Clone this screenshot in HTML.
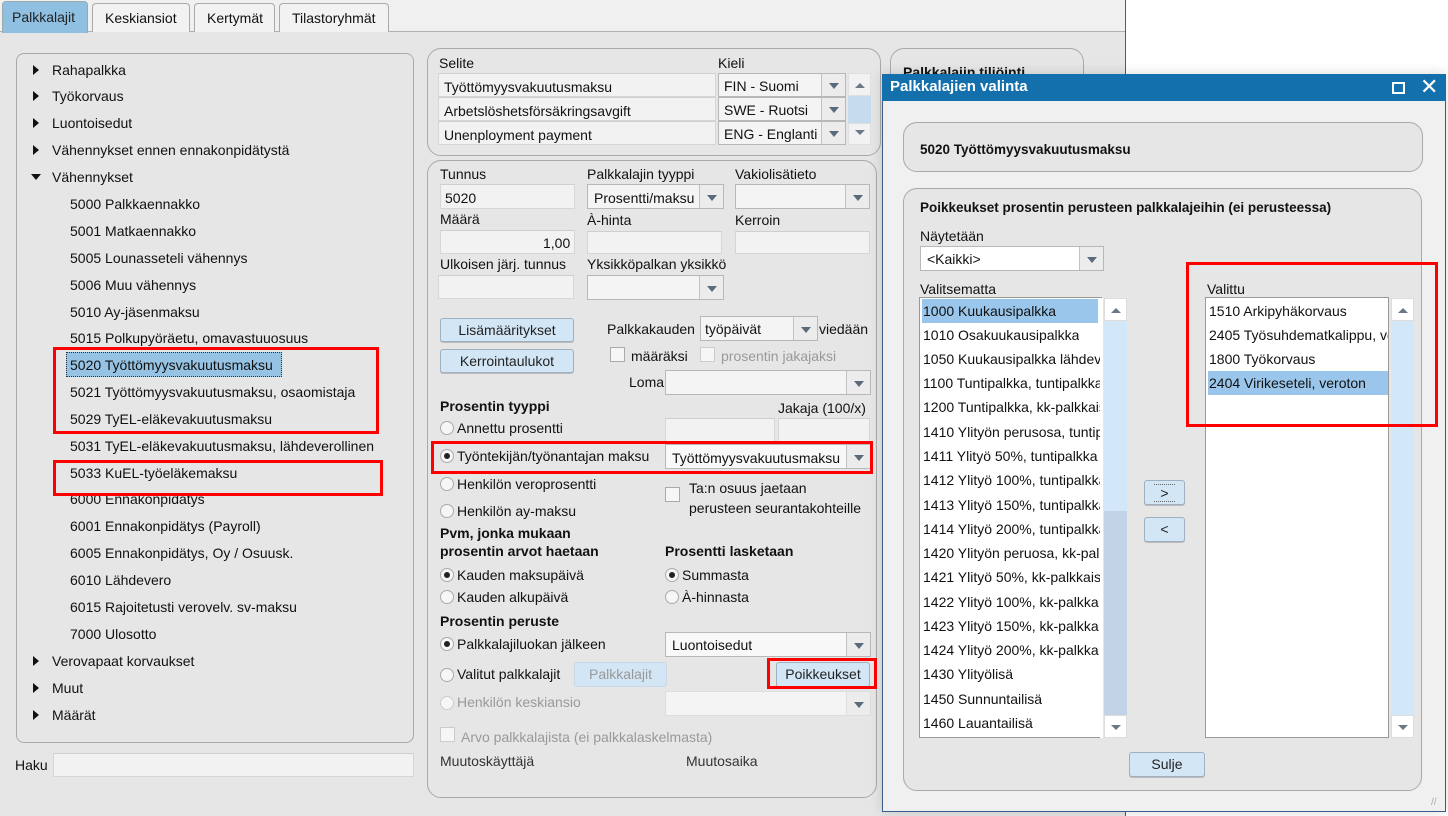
<!DOCTYPE html>
<html><head><meta charset="utf-8"><style>
*{box-sizing:border-box;margin:0;padding:0}
body{width:1448px;height:816px;position:relative;overflow:hidden;background:#fff;font-family:"Liberation Sans",Arial,sans-serif;font-size:14px;color:#111}
div,span{position:absolute}
.t{white-space:nowrap;line-height:16px}
.b{font-weight:bold}
.g{color:#999}
.inp{background:#f2f2f2;border:1px solid #d6d6d6;border-top-color:#cfcfcf}
.cb{background:#f4f4f4;border:1px solid #b8b8b8}
.cb .ar{right:0;top:0;bottom:0;width:24px;border-left:1px solid #c2c2c2;background:#ececec}
.ar:after{content:"";position:absolute;left:7px;top:50%;margin-top:-2px;border-left:5px solid transparent;border-right:5px solid transparent;border-top:6px solid #5a6a7a}
.panel{border:1px solid #a9a9a9;border-radius:14px;background:#e6e6e6}
.btn{background:#d3e6f5;border:1px solid #9fb0c0;border-radius:3px;text-align:center;line-height:22px;color:#222;box-shadow:0 1px 0 #bbb}
.red{border:3px solid #f00}
.rad{width:14px;height:14px;border:1px solid #aaa;border-radius:50%;background:#f6f6f6}
.rad.on:after{content:"";position:absolute;left:3px;top:3px;width:6px;height:6px;border-radius:50%;background:#222}
.chk{width:15px;height:15px;border:1px solid #aaa;background:#f6f6f6}
.tri{width:0;height:0;border-top:5px solid transparent;border-bottom:5px solid transparent;border-left:6px solid #111}
.trd{width:0;height:0;border-left:5px solid transparent;border-right:5px solid transparent;border-top:6px solid #111}
.li{left:2px;height:24px;line-height:24px;padding-left:1px;white-space:nowrap;overflow:hidden}
.su:after{content:"";position:absolute;left:6px;top:9px;border-left:5px solid transparent;border-right:5px solid transparent;border-bottom:5px solid #6a7888}
.sd:after{content:"";position:absolute;left:6px;top:9px;border-left:5px solid transparent;border-right:5px solid transparent;border-top:5px solid #6a7888}
</style></head><body>
<!-- main window -->
<div style="left:0;top:0;width:1126px;height:816px;background:#e6e6e6;border-right:1px solid #4a5a80"></div>
<div style="left:0;top:0;width:1125px;height:32px;background:#f0f0f0;border-bottom:1px solid #b0b0b0"></div>
<div style="left:2px;top:1px;width:86px;height:32px;background:#8fc0e2;border:1px solid #9aa;border-bottom:none;border-radius:4px 4px 0 0"></div>
<span class="t" style="left:12px;top:9px;color:#222">Palkkalajit</span>
<div style="left:92px;top:3px;width:98px;height:29px;background:#f2f2f2;border:1px solid #aaa;border-bottom:none;border-radius:4px 4px 0 0"></div>
<span class="t" style="left:105px;top:10px">Keskiansiot</span>
<div style="left:194px;top:3px;width:81px;height:29px;background:#f2f2f2;border:1px solid #aaa;border-bottom:none;border-radius:4px 4px 0 0"></div>
<span class="t" style="left:207px;top:10px">Kertymät</span>
<div style="left:279px;top:3px;width:110px;height:29px;background:#f2f2f2;border:1px solid #aaa;border-bottom:none;border-radius:4px 4px 0 0"></div>
<span class="t" style="left:292px;top:10px">Tilastoryhmät</span>

<!-- left tree -->
<div class="panel" style="left:16px;top:53px;width:398px;height:690px;border-radius:8px"></div>
<div class="tri" style="left:33px;top:65px"></div><span class="t" style="left:52px;top:62px">Rahapalkka</span>
<div class="tri" style="left:33px;top:91px"></div><span class="t" style="left:52px;top:88px">Työkorvaus</span>
<div class="tri" style="left:33px;top:118px"></div><span class="t" style="left:52px;top:115px">Luontoisedut</span>
<div class="tri" style="left:33px;top:145px"></div><span class="t" style="left:52px;top:142px">Vähennykset ennen ennakonpidätystä</span>
<div class="trd" style="left:31px;top:174px"></div><span class="t" style="left:52px;top:169px">Vähennykset</span>
<span class="t" style="left:70px;top:196px">5000 Palkkaennakko</span>
<span class="t" style="left:70px;top:223px">5001 Matkaennakko</span>
<span class="t" style="left:70px;top:250px">5005 Lounasseteli vähennys</span>
<span class="t" style="left:70px;top:277px">5006 Muu vähennys</span>
<span class="t" style="left:70px;top:304px">5010 Ay-jäsenmaksu</span>
<span class="t" style="left:70px;top:330px">5015 Polkupyöräetu, omavastuuosuus</span>
<div style="left:66px;top:352px;width:216px;height:25px;background:#96c2e4;border:1px dotted #333"></div>
<span class="t" style="left:70px;top:357px">5020 Työttömyysvakuutusmaksu</span>
<span class="t" style="left:70px;top:384px">5021 Työttömyysvakuutusmaksu, osaomistaja</span>
<span class="t" style="left:70px;top:411px">5029 TyEL-eläkevakuutusmaksu</span>
<span class="t" style="left:70px;top:438px">5031 TyEL-eläkevakuutusmaksu, lähdeverollinen</span>
<span class="t" style="left:70px;top:465px">5033 KuEL-työeläkemaksu</span>
<span class="t" style="left:70px;top:491px">6000 Ennakonpidätys</span>
<span class="t" style="left:70px;top:518px">6001 Ennakonpidätys (Payroll)</span>
<span class="t" style="left:70px;top:545px">6005 Ennakonpidätys, Oy / Osuusk.</span>
<span class="t" style="left:70px;top:572px">6010 Lähdevero</span>
<span class="t" style="left:70px;top:599px">6015 Rajoitetusti verovelv. sv-maksu</span>
<span class="t" style="left:70px;top:626px">7000 Ulosotto</span>
<div class="tri" style="left:33px;top:656px"></div><span class="t" style="left:52px;top:653px">Verovapaat korvaukset</span>
<div class="tri" style="left:33px;top:683px"></div><span class="t" style="left:52px;top:680px">Muut</span>
<div class="tri" style="left:33px;top:710px"></div><span class="t" style="left:52px;top:707px">Määrät</span>
<span class="t" style="left:15px;top:757px">Haku</span>
<div class="inp" style="left:53px;top:753px;width:361px;height:24px"></div>

<!-- selite panel -->
<div class="panel" style="left:427px;top:48px;width:454px;height:108px"></div>
<span class="t" style="left:439px;top:55px">Selite</span><span class="t" style="left:718px;top:55px">Kieli</span>
<div class="inp" style="left:438px;top:73px;width:278px;height:24px"></div><span class="t" style="left:444px;top:79px">Työttömyysvakuutusmaksu</span>
<div class="inp" style="left:438px;top:97px;width:278px;height:24px"></div><span class="t" style="left:444px;top:103px">Arbetslöshetsförsäkringsavgift</span>
<div class="inp" style="left:438px;top:121px;width:278px;height:24px"></div><span class="t" style="left:444px;top:127px">Unenployment payment</span>
<div class="cb" style="left:718px;top:73px;width:128px;height:24px"><div class="ar"></div></div><span class="t" style="left:724px;top:78px">FIN - Suomi</span>
<div class="cb" style="left:718px;top:97px;width:128px;height:24px"><div class="ar"></div></div><span class="t" style="left:724px;top:102px">SWE - Ruotsi</span>
<div class="cb" style="left:718px;top:121px;width:128px;height:24px"><div class="ar"></div></div><span class="t" style="left:724px;top:126px">ENG - Englanti</span>
<div class="su" style="left:848px;top:73px;width:23px;height:23px;background:#f2f2f2;border:1px solid #e0e0e0"></div>
<div style="left:848px;top:96px;width:23px;height:27px;background:#c6dcee"></div>
<div class="su" style="left:848px;top:123px;width:23px;height:22px;background:#f2f2f2;border:1px solid #e0e0e0;transform:scaleY(-1)"></div>

<!-- main form panel -->
<div class="panel" style="left:427px;top:160px;width:450px;height:638px"></div>
<span class="t" style="left:440px;top:166px">Tunnus</span><span class="t" style="left:587px;top:166px">Palkkalajin tyyppi</span><span class="t" style="left:735px;top:166px">Vakiolisätieto</span>
<div class="inp" style="left:440px;top:184px;width:135px;height:25px"></div><span class="t" style="left:445px;top:190px">5020</span>
<div class="cb" style="left:587px;top:184px;width:137px;height:25px"><div class="ar"></div></div><span class="t" style="left:594px;top:190px">Prosentti/maksu</span>
<div class="cb" style="left:735px;top:184px;width:135px;height:25px"><div class="ar"></div></div>
<span class="t" style="left:440px;top:211px">Määrä</span><span class="t" style="left:587px;top:212px">À-hinta</span><span class="t" style="left:735px;top:212px">Kerroin</span>
<div class="inp" style="left:440px;top:230px;width:135px;height:24px"></div><span class="t" style="left:543px;top:235px">1,00</span>
<div class="inp" style="left:587px;top:231px;width:135px;height:23px"></div>
<div class="inp" style="left:735px;top:231px;width:135px;height:23px"></div>
<span class="t" style="left:440px;top:256px">Ulkoisen järj. tunnus</span><span class="t" style="left:587px;top:256px">Yksikköpalkan yksikkö</span>
<div class="inp" style="left:438px;top:275px;width:136px;height:24px"></div>
<div class="cb" style="left:587px;top:275px;width:137px;height:25px"><div class="ar"></div></div>
<div class="btn" style="left:440px;top:318px;width:134px;height:24px">Lisämääritykset</div>
<div class="btn" style="left:440px;top:349px;width:134px;height:24px">Kerrointaulukot</div>
<span class="t" style="left:607px;top:321px">Palkkakauden</span>
<div class="cb" style="left:700px;top:316px;width:118px;height:25px"><div class="ar"></div></div><span class="t" style="left:705px;top:321px">työpäivät</span>
<span class="t" style="left:819px;top:321px">viedään</span>
<div class="chk" style="left:610px;top:347px"></div><span class="t" style="left:631px;top:348px">määräksi</span>
<div class="chk" style="left:700px;top:347px;border-color:#ccc"></div><span class="t g" style="left:721px;top:348px">prosentin jakajaksi</span>
<span class="t" style="left:629px;top:374px">Loma</span>
<div class="cb" style="left:665px;top:370px;width:206px;height:25px"><div class="ar"></div></div>
<span class="t b" style="left:440px;top:398px">Prosentin tyyppi</span><span class="t" style="left:778px;top:400px">Jakaja (100/x)</span>
<div class="inp" style="left:665px;top:418px;width:110px;height:24px"></div><div class="inp" style="left:778px;top:418px;width:92px;height:24px"></div>
<div class="rad" style="left:440px;top:421px"></div><span class="t" style="left:457px;top:420px">Annettu prosentti</span>
<div class="rad on" style="left:440px;top:449px"></div><span class="t" style="left:457px;top:448px">Työntekijän/työnantajan maksu</span>
<div class="cb" style="left:665px;top:444px;width:206px;height:25px;background:#f8f8f8"><div class="ar"></div></div><span class="t" style="left:672px;top:450px">Työttömyysvakuutusmaksu</span>
<div class="rad" style="left:440px;top:477px"></div><span class="t" style="left:457px;top:476px">Henkilön veroprosentti</span>
<div class="chk" style="left:665px;top:487px"></div><span class="t" style="left:689px;top:480px">Ta:n osuus jaetaan</span><span class="t" style="left:689px;top:500px">perusteen seurantakohteille</span>
<div class="rad" style="left:440px;top:504px"></div><span class="t" style="left:457px;top:503px">Henkilön ay-maksu</span>
<span class="t b" style="left:440px;top:525px">Pvm, jonka mukaan</span><span class="t b" style="left:440px;top:543px">prosentin arvot haetaan</span><span class="t b" style="left:665px;top:543px">Prosentti lasketaan</span>
<div class="rad on" style="left:440px;top:568px"></div><span class="t" style="left:457px;top:567px">Kauden maksupäivä</span>
<div class="rad on" style="left:665px;top:568px"></div><span class="t" style="left:682px;top:567px">Summasta</span>
<div class="rad" style="left:440px;top:590px"></div><span class="t" style="left:457px;top:589px">Kauden alkupäivä</span>
<div class="rad" style="left:665px;top:590px"></div><span class="t" style="left:682px;top:589px">À-hinnasta</span>
<span class="t b" style="left:440px;top:613px">Prosentin peruste</span>
<div class="rad on" style="left:440px;top:637px"></div><span class="t" style="left:457px;top:636px">Palkkalajiluokan jälkeen</span>
<div class="cb" style="left:665px;top:632px;width:206px;height:25px;background:#f8f8f8"><div class="ar"></div></div><span class="t" style="left:672px;top:637px">Luontoisedut</span>
<div class="rad" style="left:440px;top:668px"></div><span class="t" style="left:457px;top:666px">Valitut palkkalajit</span>
<div class="btn" style="left:574px;top:662px;width:93px;height:25px;border-color:#c8d8e6;color:#999;box-shadow:none">Palkkalajit</div>
<div class="btn" style="left:776px;top:662px;width:94px;height:25px">Poikkeukset</div>
<div class="rad" style="left:440px;top:696px;border-color:#ccc"></div><span class="t g" style="left:457px;top:694px">Henkilön keskiansio</span>
<div class="cb" style="left:665px;top:691px;width:206px;height:25px;border-color:#ddd"><div class="ar" style="border-color:#ddd"></div></div>
<div class="chk" style="left:440px;top:727px;border-color:#ccc"></div><span class="t g" style="left:461px;top:729px">Arvo palkkalajista (ei palkkalaskelmasta)</span>
<span class="t" style="left:440px;top:753px;color:#333">Muutoskäyttäjä</span><span class="t" style="left:686px;top:753px;color:#333">Muutosaika</span>

<!-- partial right panel -->
<div class="panel" style="left:890px;top:48px;width:194px;height:60px"></div>
<span class="t b" style="left:903px;top:64px">Palkkalajin tiliöinti</span>

<!-- red boxes main -->
<div class="red" style="left:53px;top:347px;width:326px;height:87px"></div>
<div class="red" style="left:53px;top:460px;width:330px;height:36px"></div>
<div class="red" style="left:431px;top:441px;width:442px;height:33px"></div>
<div class="red" style="left:767px;top:658px;width:110px;height:31px"></div>

<!-- dialog -->
<div style="left:882px;top:74px;width:564px;height:738px;background:#f0f0f0;border:1px solid #3a5a88;box-shadow:0 0 12px rgba(0,0,0,.15)"></div>
<div style="left:882px;top:74px;width:564px;height:27px;background:#1470ad;border-radius:4px 4px 0 0"></div>
<span class="t b" style="left:890px;top:79px;color:#fff;font-size:15px">Palkkalajien valinta</span>
<div style="left:1392px;top:82px;width:13px;height:12px;border:2px solid #fff"></div>
<span class="t" style="left:1420px;top:77px;color:#fff;font-size:22px;line-height:20px">✕</span>
<div class="panel" style="left:903px;top:122px;width:520px;height:50px;background:#e6e6e6"></div>
<span class="t b" style="left:920px;top:142px;font-size:13.5px">5020 Työttömyysvakuutusmaksu</span>
<div class="panel" style="left:903px;top:188px;width:519px;height:603px"></div>
<span class="t b" style="left:920px;top:200px;font-size:13.5px">Poikkeukset prosentin perusteen palkkalajeihin (ei perusteessa)</span>
<span class="t" style="left:920px;top:228px">Näytetään</span>
<div class="cb" style="left:920px;top:246px;width:184px;height:25px;background:#fff"><div class="ar"></div></div><span class="t" style="left:927px;top:251px">&lt;Kaikki&gt;</span>
<span class="t" style="left:920px;top:281px">Valitsematta</span>
<span class="t" style="left:1207px;top:281px">Valittu</span>
<div style="left:919px;top:297px;width:183px;height:441px;background:#fff;border:1px solid #999;overflow:hidden">
<div class="li" style="top:1px;width:176px;background:#99c6ea">1000 Kuukausipalkka</div>
<div class="li" style="top:25px">1010 Osakuukausipalkka</div>
<div class="li" style="top:49px">1050 Kuukausipalkka lähdeverollinen</div>
<div class="li" style="top:73px">1100 Tuntipalkka, tuntipalkkaiset</div>
<div class="li" style="top:97px">1200 Tuntipalkka, kk-palkkaiset</div>
<div class="li" style="top:122px">1410 Ylityön perusosa, tuntipalkka</div>
<div class="li" style="top:146px">1411 Ylityö 50%, tuntipalkka</div>
<div class="li" style="top:170px">1412 Ylityö 100%, tuntipalkka</div>
<div class="li" style="top:195px">1413 Ylityö 150%, tuntipalkka</div>
<div class="li" style="top:219px">1414 Ylityö 200%, tuntipalkka</div>
<div class="li" style="top:243px">1420 Ylityön peruosa, kk-palkka</div>
<div class="li" style="top:267px">1421 Ylityö 50%, kk-palkkaiset</div>
<div class="li" style="top:292px">1422 Ylityö 100%, kk-palkka</div>
<div class="li" style="top:316px">1423 Ylityö 150%, kk-palkka</div>
<div class="li" style="top:340px">1424 Ylityö 200%, kk-palkka</div>
<div class="li" style="top:364px">1430 Ylityölisä</div>
<div class="li" style="top:389px">1450 Sunnuntailisä</div>
<div class="li" style="top:413px">1460 Lauantailisä</div>
</div>
<div style="left:1100px;top:298px;width:3px;height:440px;background:#fff"></div>
<div class="su" style="left:1104px;top:298px;width:23px;height:23px;background:#fff;border:1px solid #ddd"></div>
<div style="left:1104px;top:321px;width:23px;height:190px;background:#d2e7f8"></div>
<div style="left:1104px;top:511px;width:23px;height:204px;background:#c2d3e7"></div>
<div class="sd" style="left:1104px;top:715px;width:23px;height:23px;background:#fff;border:1px solid #ddd"></div>
<div class="btn" style="left:1144px;top:480px;width:41px;height:25px;line-height:24px"><span style="position:static;border-top:1px dotted #666;border-bottom:1px dotted #666;padding:0 6px;line-height:10px">&gt;</span></div>
<div class="btn" style="left:1144px;top:517px;width:41px;height:25px">&lt;</div>
<div style="left:1205px;top:297px;width:184px;height:441px;background:#fff;border:1px solid #999;overflow:hidden">
<div class="li" style="top:1px">1510 Arkipyhäkorvaus</div>
<div class="li" style="top:25px">2405 Työsuhdematkalippu, verollinen</div>
<div class="li" style="top:49px">1800 Työkorvaus</div>
<div class="li" style="top:73px;width:180px;background:#99c6ea">2404 Virikeseteli, veroton</div>
</div>
<div class="su" style="left:1391px;top:298px;width:23px;height:23px;background:#fff;border:1px solid #ddd"></div>
<div style="left:1391px;top:321px;width:23px;height:394px;background:#d2e7f8"></div>
<div class="sd" style="left:1391px;top:715px;width:23px;height:23px;background:#fff;border:1px solid #ddd"></div>
<div class="btn" style="left:1129px;top:752px;width:76px;height:25px">Sulje</div>
<div class="red" style="left:1186px;top:262px;width:252px;height:165px"></div>
<span class="t" style="left:1431px;top:795px;color:#aaa;font-size:10px">//</span>
</body></html>
